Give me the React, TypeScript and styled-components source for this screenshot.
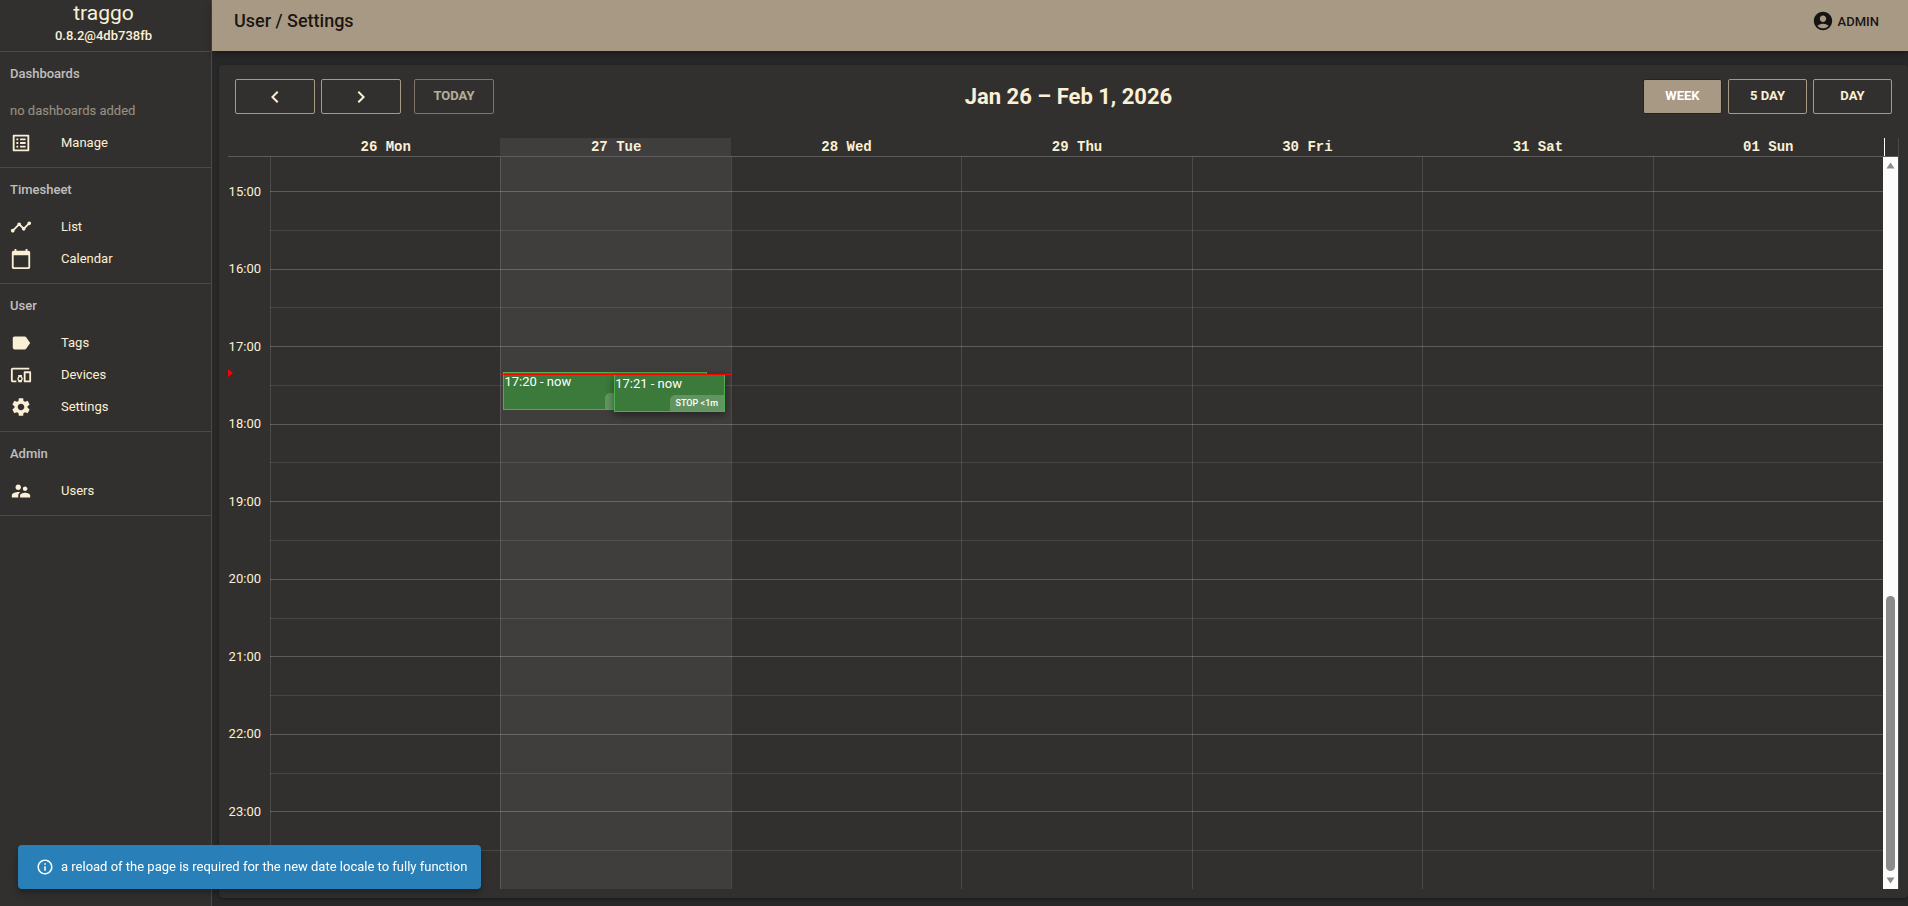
import React from "react";
import styled, { createGlobalStyle } from "styled-components";
import {
  MdAccountCircle,
  MdCalendarToday,
  MdChevronLeft,
  MdChevronRight,
  MdDevicesOther,
  MdInfoOutline,
  MdLabel,
  MdListAlt,
  MdSettings,
  MdSupervisorAccount,
  MdTimeline,
} from "react-icons/md";

const color = {
  page: "#282828",
  paper: "#32302f",
  bar: "#a89984",
  text: "#fbf0d5",
  divider: "rgba(255, 255, 255, 0.13)",
  gridStrong: "rgba(255, 255, 255, 0.21)",
  gridWeak: "rgba(255, 255, 255, 0.1)",
};

const GlobalStyle = createGlobalStyle`
  * { box-sizing: border-box; }
  body {
    margin: 0;
    background: ${color.page};
    color: ${color.text};
    font: 400 13px/20px Roboto, sans-serif;
  }
  button { font-family: inherit; cursor: pointer; }
`;

const Shell = styled.div`
  display: flex;
  min-height: 100vh;
`;

/* ---------- side navigation ---------- */

const Sidebar = styled.aside`
  flex: 0 0 212px;
  background: ${color.paper};
  border-right: 1px solid ${color.divider};
`;

const Brand = styled.header`
  display: flex;
  flex-direction: column;
  align-items: center;
  height: 52px;
  padding-right: 4px;
  border-bottom: 1px solid ${color.divider};
`;

const BrandName = styled.a`
  color: inherit;
  font-size: 21px;
  line-height: 26px;
  text-decoration: none;
`;

const Version = styled.a`
  color: inherit;
  font-weight: 500;
  text-decoration: none;
`;

const Section = styled.section`
  padding-bottom: 8px;
  border-bottom: 1px solid ${color.divider};
`;

const SectionTitle = styled.h2`
  margin: 0;
  padding-left: 10px;
  color: rgba(255, 255, 255, 0.7);
  font-size: 13px;
  font-weight: 500;
  line-height: 43px;
`;

const EmptyNote = styled.p`
  margin: 0;
  padding-left: 10px;
  line-height: 32px;
  opacity: 0.5;
`;

const NavLink = styled.a`
  display: flex;
  align-items: center;
  gap: 29px;
  height: 32px;
  padding-left: 10px;
  color: inherit;
  text-decoration: none;
  svg { font-size: 22px; }
`;

/* ---------- top bar ---------- */

const Main = styled.div`
  flex: 1;
  min-width: 0;
  display: flex;
  flex-direction: column;
`;

const TopBar = styled.header`
  display: flex;
  justify-content: space-between;
  height: 51px;
  padding: 10px 29px 0 22px;
  background: ${color.bar};
  color: rgba(0, 0, 0, 0.87);
  box-shadow: 0 2px 4px rgba(0, 0, 0, 0.2), 0 4px 9px rgba(0, 0, 0, 0.16);
`;

const PageTitle = styled.h1`
  margin: 0;
  font-size: 18px;
  font-weight: 500;
  line-height: 22px;
`;

const AccountButton = styled.button`
  display: flex;
  align-items: center;
  gap: 4px;
  height: 22px;
  padding: 0;
  border: 0;
  background: none;
  color: inherit;
  font-size: 13px;
  font-weight: 500;
  svg { font-size: 22px; }
`;

/* ---------- calendar ---------- */

const Card = styled.main`
  flex: 1;
  display: flex;
  flex-direction: column;
  margin: 14px 0 8px 7px;
  padding: 14px 9px 9px;
  border-radius: 4px;
  background: ${color.paper};
  box-shadow: 0 1px 3px rgba(0, 0, 0, 0.4);
`;

const Toolbar = styled.div`
  display: flex;
  align-items: center;
  justify-content: space-between;
  margin-bottom: 24px;
  padding: 0 7px;
`;

const ButtonGroup = styled.div`
  display: flex;
  gap: 6px;
`;

const ToolButton = styled.button<{ $active?: boolean; $spaced?: boolean; $wide?: boolean }>`
  display: flex;
  align-items: center;
  justify-content: center;
  width: ${(p) => (p.$wide ? "80px" : "79px")};
  height: 35px;
  margin-left: ${(p) => (p.$spaced ? "7px" : 0)};
  padding: 0 0 2px;
  border: 1px solid ${(p) => (p.$active ? "#1a252f" : color.bar)};
  border-radius: 2px;
  background: ${(p) => (p.$active ? color.bar : "transparent")};
  color: ${(p) => (p.$active ? "#fff" : color.text)};
  font-size: 13px;
  font-weight: 700;
  &:disabled { opacity: 0.65; cursor: default; }
  svg { font-size: 24px; margin-top: 2px; }
`;

const RangeTitle = styled.h2`
  margin: 0;
  font-size: 22px;
  font-weight: 700;
  line-height: 28px;
`;

const Calendar = styled.div`
  flex: 1;
  display: flex;
  flex-direction: column;
  border-right: 1px solid ${color.divider};
`;

const DayHeader = styled.div`
  display: grid;
  grid-template-columns: 42px minmax(0, 1fr) 15px;
  height: 19px;
  border-bottom: 1px solid ${color.gridStrong};
`;

const DayNames = styled.div`
  grid-column: 2;
  display: grid;
  grid-template-columns: repeat(7, 1fr);
`;

const DayName = styled.div<{ $today?: boolean }>`
  padding-left: 1px;
  background: ${(p) => (p.$today ? "rgba(255, 255, 255, 0.07)" : "none")};
  font: 700 14px/18px "Liberation Mono", monospace;
  text-align: center;
`;

const HeaderEnd = styled.div`
  margin-left: 1px;
  border-left: 1px solid #fff;
`;

const Body = styled.div`
  flex: 1;
  display: grid;
  grid-template-columns: 42px minmax(0, 1fr) 15px;
  grid-template-rows: minmax(600px, 1fr);
`;

const Slots = styled.div`
  grid-area: 1 / 1 / 2 / 3;
  display: grid;
  grid-template-rows: 34px repeat(18, 1fr);
`;

const Slot = styled.div<{ $kind: "none" | "hour" | "half" }>`
  display: grid;
  grid-template-columns: 42px 1fr;
  &::after {
    content: "";
    grid-column: 2;
    border-top: ${(p) =>
      p.$kind === "none"
        ? "0"
        : `1px solid ${p.$kind === "hour" ? color.gridStrong : color.gridWeak}`};
  }
`;

const SlotLabel = styled.span`
  display: flex;
  align-items: center;
  justify-content: flex-end;
  height: 1px;
  padding-right: 9px;
`;

const NowMarkerLane = styled.div`
  grid-area: 1 / 1 / 2 / 2;
  position: relative;
`;

const NowArrow = styled.span`
  position: absolute;
  left: 0;
  margin-top: -5px;
  border: 4px solid transparent;
  border-left: 5px solid #f00;
  border-right: 0;
`;

const Days = styled.div`
  grid-area: 1 / 2 / 2 / 3;
  display: grid;
  grid-template-columns: repeat(7, 1fr);
`;

const Day = styled.div<{ $today?: boolean }>`
  position: relative;
  border-left: 1px solid ${color.divider};
  background: ${(p) => (p.$today ? "rgba(255, 255, 255, 0.07)" : "none")};
`;

const Events = styled.div`
  position: relative;
  height: 100%;
  margin: 0 6px 0 2px;
`;

const Event = styled.article<{ $raised?: boolean }>`
  position: absolute;
  left: ${(p) => (p.$raised ? "50%" : 0)};
  width: ${(p) => (p.$raised ? "50%" : "92%")};
  height: 38px;
  border: 1px solid #4caf50;
  background: #3b7a3a;
  color: #fff;
  line-height: 17px;
  box-shadow: ${(p) => (p.$raised ? "0 3px 8px rgba(0, 0, 0, 0.45)" : "none")};
`;

const StopButton = styled.button<{ $wide?: boolean }>`
  position: absolute;
  right: 0;
  bottom: 0;
  width: ${(p) => (p.$wide ? "101px" : "54px")};
  height: 16px;
  padding: 0;
  border: 0;
  border-radius: 5px 0 0;
  background: rgba(255, 255, 255, 0.2);
  color: #fff;
  font-size: 9px;
  font-weight: 500;
  line-height: 16px;
`;

const NowLine = styled.span`
  position: absolute;
  left: 0;
  right: 0;
  border-top: 1px solid #f00;
`;

const ScrollTrack = styled.div`
  grid-area: 1 / 3 / 2 / 4;
  display: flex;
  flex-direction: column;
  align-items: center;
  justify-content: space-between;
  padding: 5px 0;
  background: #fcfcfc;
`;

const ScrollRail = styled.div`
  flex: 1;
  display: flex;
  flex-direction: column;
  justify-content: flex-end;
  margin: 5px 0 6px;
`;

const ScrollThumb = styled.div`
  width: 9px;
  height: 39.4%;
  border-radius: 5px;
  background: #8b8b8b;
`;

const Snackbar = styled.div`
  position: fixed;
  left: 18px;
  bottom: 17px;
  display: flex;
  align-items: center;
  gap: 7px;
  height: 44px;
  padding: 0 14px 0 18px;
  border-radius: 4px;
  background: #2980b9;
  color: #fff;
  box-shadow: 0 3px 5px rgba(0, 0, 0, 0.2), 0 6px 10px rgba(0, 0, 0, 0.14);
  svg { font-size: 18px; }
`;

/* ---------- data ---------- */

const navigation = [
  { title: "Dashboards", empty: "no dashboards added", links: [{ label: "Manage", Icon: MdListAlt }] },
  {
    title: "Timesheet",
    links: [
      { label: "List", Icon: MdTimeline },
      { label: "Calendar", Icon: MdCalendarToday },
    ],
  },
  {
    title: "User",
    links: [
      { label: "Tags", Icon: MdLabel },
      { label: "Devices", Icon: MdDevicesOther },
      { label: "Settings", Icon: MdSettings },
    ],
  },
  { title: "Admin", links: [{ label: "Users", Icon: MdSupervisorAccount }] },
];

const days = ["26 Mon", "27 Tue", "28 Wed", "29 Thu", "30 Fri", "31 Sat", "01 Sun"];
const today = "27 Tue";

/* The visible part of the day starts 34px above the 15:00 line and ends at midnight. */
const topOf = (hours: number) => {
  const share = (hours - 15) / 9;
  return `calc(34px + (100% - 34px) * ${share})`;
};

const slots = Array.from({ length: 18 }, (_, i) => ({
  hour: 15 + Math.floor(i / 2),
  full: i % 2 === 0,
}));

const now = 17 + 21.5 / 60;

const Arrow = ({ up }: { up?: boolean }) => (
  <svg width="9" height="7" viewBox="0 0 9 7" aria-hidden>
    <path d={up ? "M4.5 0.5 8.5 6.5H0.5Z" : "M4.5 6.5 8.5 0.5H0.5Z"} fill="#8b8b8b" />
  </svg>
);

export default function App() {
  return (
    <>
      <GlobalStyle />
      <Shell>
        <Sidebar>
          <Brand>
            <BrandName href="#">traggo</BrandName>
            <Version href="#version">0.8.2@4db738fb</Version>
          </Brand>
          <nav>
            {navigation.map(({ title, empty, links }) => (
              <Section key={title}>
                <SectionTitle>{title}</SectionTitle>
                {empty && <EmptyNote>{empty}</EmptyNote>}
                {links.map(({ label, Icon }) => (
                  <NavLink key={label} href={`#${label.toLowerCase()}`}>
                    <Icon />
                    {label}
                  </NavLink>
                ))}
              </Section>
            ))}
          </nav>
        </Sidebar>

        <Main>
          <TopBar>
            <PageTitle>User / Settings</PageTitle>
            <AccountButton>
              <MdAccountCircle />
              ADMIN
            </AccountButton>
          </TopBar>

          <Card>
            <Toolbar>
              <ButtonGroup>
                <ToolButton $wide aria-label="Previous"><MdChevronLeft /></ToolButton>
                <ToolButton $wide aria-label="Next"><MdChevronRight /></ToolButton>
                <ToolButton $wide disabled $spaced>TODAY</ToolButton>
              </ButtonGroup>
              <RangeTitle>Jan 26 – Feb 1, 2026</RangeTitle>
              <ButtonGroup>
                <ToolButton $active>WEEK</ToolButton>
                <ToolButton>5 DAY</ToolButton>
                <ToolButton>DAY</ToolButton>
              </ButtonGroup>
            </Toolbar>

            <Calendar>
              <DayHeader>
                <DayNames>
                  {days.map((d) => (
                    <DayName key={d} $today={d === today}>{d}</DayName>
                  ))}
                </DayNames>
                <HeaderEnd />
              </DayHeader>
              <Body>
                <Slots>
                  <Slot $kind="none" />
                  {slots.map(({ hour, full }) => (
                    <Slot key={`${hour}-${full}`} $kind={full ? "hour" : "half"}>
                      {full && <SlotLabel>{hour}:00</SlotLabel>}
                    </Slot>
                  ))}
                </Slots>
                <NowMarkerLane>
                  <NowArrow style={{ top: topOf(now) }} />
                </NowMarkerLane>
                <Days>
                  {days.map((d) => (
                    <Day key={d} $today={d === today}>
                      {d === today && (
                        <>
                          <Events>
                            <Event style={{ top: topOf(17 + 20 / 60) }}>
                              17:20 - now
                              <StopButton $wide aria-label="Stop" />
                            </Event>
                            <Event $raised style={{ top: topOf(now) }}>
                              17:21 - now
                              <StopButton>STOP &lt;1m</StopButton>
                            </Event>
                          </Events>
                          <NowLine style={{ top: topOf(now) }} />
                        </>
                      )}
                    </Day>
                  ))}
                </Days>
                <ScrollTrack>
                  <Arrow up />
                  <ScrollRail>
                    <ScrollThumb />
                  </ScrollRail>
                  <Arrow />
                </ScrollTrack>
              </Body>
            </Calendar>
          </Card>
        </Main>
      </Shell>

      <Snackbar role="status">
        <MdInfoOutline />
        a reload of the page is required for the new date locale to fully function
      </Snackbar>
    </>
  );
}
